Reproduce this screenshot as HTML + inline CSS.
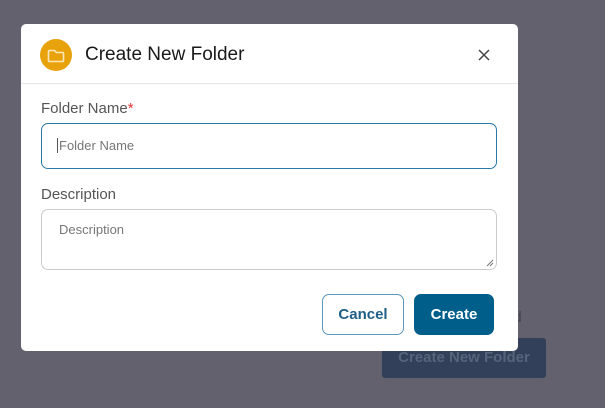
<!DOCTYPE html>
<html><head><style>
html,body{margin:0;padding:0;width:605px;height:408px;overflow:hidden;background:#62616d;font-family:"Liberation Sans",sans-serif;}
.bgbtn{position:absolute;left:382px;top:338px;width:164px;height:40px;background:#33405a;border-radius:3px;color:#56647b;font-size:15px;font-weight:bold;line-height:40px;text-align:center;}
.ed{position:absolute;left:505px;top:309px;color:#44444c;font-size:15px;}
.modal{position:absolute;left:21px;top:24px;width:497px;height:327px;background:#fff;border-radius:5px;}
.hdr{position:absolute;left:0;top:0;width:100%;height:59px;border-bottom:1px solid #e6e6e6;}
.ico{position:absolute;left:19px;top:15px;width:32px;height:32px;border-radius:50%;background:#e8a20c;}
.title{position:absolute;left:64px;top:20px;font-size:19px;color:#1a1a1a;}
.x{position:absolute;left:456px;top:24px;}
.lbl{position:absolute;left:20px;font-size:15px;color:#555;}
.in{position:absolute;left:20px;width:456px;box-sizing:border-box;border-radius:7px;font-size:13px;color:#777;}
.btn{position:absolute;top:270px;height:41px;box-sizing:border-box;border-radius:7px;font-size:15px;font-weight:bold;text-align:center;}
</style></head><body>
<div class="ed">ed</div>
<div class="bgbtn">Create New Folder</div>
<div class="modal">
 <div class="hdr">
  <div class="ico"><svg width="32" height="32" viewBox="0 0 32 32"><path d="M9.5 11.5h5l2 2h6a1 1 0 0 1 1 1v7a1 1 0 0 1-1 1h-13a1 1 0 0 1-1-1v-9a1 1 0 0 1 1-1z" fill="none" stroke="#fbe7b8" stroke-width="1.6" stroke-linejoin="round"/></svg></div>
  <div class="title">Create New Folder</div>
  <svg class="x" width="14" height="14" viewBox="0 0 14 14"><path d="M2 2L12 12M12 2L2 12" stroke="#444" stroke-width="1.5"/></svg>
 </div>
 <div class="lbl" style="top:76px">Folder Name<span style="color:#d33">*</span></div>
 <div class="in" style="top:99px;height:46px;border:1.5px solid #2a78a6;padding:14px 0 0 15px;"><span style="border-left:1.5px solid #555;padding-left:1px">Folder Name</span></div>
 <div class="lbl" style="top:162px">Description</div>
 <div class="in" style="top:185px;height:61px;border:1px solid #ccc;padding:12px 0 0 17px;">Description
  <svg style="position:absolute;right:2px;bottom:2px" width="8" height="8" viewBox="0 0 8 8"><path d="M1 7L7 1M4 7L7 4" stroke="#777" stroke-width="1"/></svg></div>
 <div class="btn" style="left:301px;width:82px;border:1.5px solid #5b97b8;color:#1f5f87;line-height:40px;">Cancel</div>
 <div class="btn" style="left:393px;width:80px;background:#005e8b;color:#fff;line-height:41px;">Create</div>
</div>
</body></html>
